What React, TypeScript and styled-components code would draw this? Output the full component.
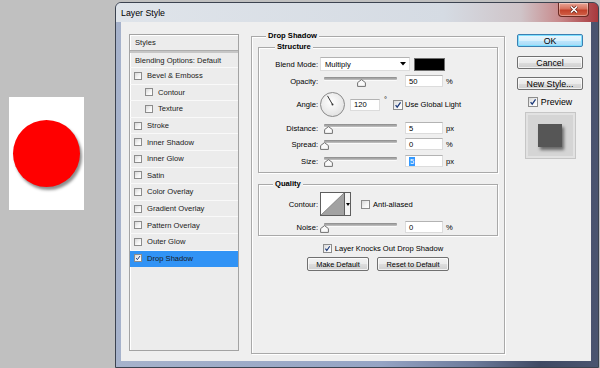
import React from "react";
import styled, { createGlobalStyle, css } from "styled-components";

const FONT = `"Liberation Sans", Arial, sans-serif`;

const GlobalStyle = createGlobalStyle`
  html, body { margin: 0; padding: 0; }
  body { background: #c0c0c0; font-family: ${FONT}; color: #000; }
  * { box-sizing: border-box; }
`;

const Page = styled.div`
  width: 600px;
  height: 368px;
  overflow: hidden;
  display: flex;
  align-items: flex-start;
  background: #c0c0c0;
`;

const Desk = styled.div`
  width: 115px;
  flex: none;
  padding: 97px 0 0 9px;
`;

const Canvas = styled.div`
  width: 75px;
  height: 113px;
  background: #fff;
  display: flex;
  align-items: center;
  justify-content: center;
`;

const Ball = styled.div`
  width: 67px;
  height: 67px;
  border-radius: 50%;
  background: #ff0000;
  box-shadow: 2px 3px 3px rgba(0, 0, 0, 0.45);
`;

const Win = styled.div`
  flex: none;
  width: 484px;
  height: 366px;
  margin-top: 2px;
  display: flex;
  flex-direction: column;
  border: 1px solid #3c4350;
  border-radius: 6px 6px 0 0;
  background: linear-gradient(to right, #a6b2cb 0%, #95a4c4 55%, #6d7b9b 74%, #3f4963 88%, #4b5570 100%);
  overflow: hidden;
`;

const TitleBar = styled.div`
  height: 19px;
  flex: none;
  display: flex;
  align-items: flex-start;
  justify-content: space-between;
  padding: 0 9px 0 5px;
  background: linear-gradient(to right, #dfe4ea 0%, #d5dbe3 68%, #cfc4c8 84%, #c88a8c 92%, #a8383c 100%);
`;

const Title = styled.span`
  font-size: 8.8px;
  line-height: 20px;
  color: #000;
`;

const CloseBtn = styled.div`
  width: 31px;
  height: 14px;
  display: flex;
  align-items: center;
  justify-content: center;
  border: 1px solid #6b2a22;
  border-top: none;
  border-radius: 0 0 4px 4px;
  background: linear-gradient(to bottom, #e9a797 0%, #d7705c 45%, #c2412a 55%, #d2624a 100%);
  box-shadow: inset 0 0 0 1px rgba(255, 255, 255, 0.35);
`;

const Body = styled.div`
  flex: 1;
  display: flex;
  padding: 0 7px 6px 5px;
`;

const Client = styled.div`
  flex: 1;
  display: flex;
  align-items: flex-start;
  gap: 12px;
  padding: 12px 8px 0 8px;
  background: #efefef;
  font-size: 7.6px;
`;

/* ---------- Styles list ---------- */

const StylesPanel = styled.div`
  width: 110px;
  height: 317px;
  flex: none;
  display: flex;
  flex-direction: column;
  border: 1px solid #a3a3a3;
  box-shadow: inset 1px 1px 0 #fff;
  background: #ececec;
  color: #1a1a1a;
`;

const ListHead = styled.div`
  height: 15px;
  flex: none;
  display: flex;
  align-items: center;
  padding-left: 5px;
`;

const HeadRule = styled.div`
  height: 3px;
  flex: none;
  background: #c6c6c6;
  border-top: 1px solid #acacac;
`;

const BlendRow = styled.div`
  height: 15px;
  flex: none;
  display: flex;
  align-items: center;
  padding-left: 5px;
  border-bottom: 1px solid #f9f9f9;
`;

const Item = styled.div<{ $indent: number; $selected?: boolean }>`
  height: 16.6px;
  flex: none;
  display: flex;
  align-items: center;
  gap: 5px;
  padding-left: ${(p) => p.$indent}px;
  border-bottom: 1px solid ${(p) => (p.$selected ? "#3193f5" : "#f9f9f9")};
  background: ${(p) => (p.$selected ? "#3193f5" : "transparent")};
`;

const Box = styled.span<{ $size: number }>`
  width: ${(p) => p.$size}px;
  height: ${(p) => p.$size}px;
  flex: none;
  display: inline-flex;
  align-items: center;
  justify-content: center;
  border: 1px solid #8c8c8c;
  background: linear-gradient(135deg, #d8d8d8 0%, #f6f6f6 60%, #ffffff 100%);
`;

/* ---------- Main panel ---------- */

const etched = css`
  border: 1px solid #a9a9a9;
  box-shadow: inset 1px 1px 0 #fff, 1px 1px 0 #fff;
`;

const Panel = styled.div`
  position: relative;
  width: 254px;
  height: 318px;
  flex: none;
  margin-top: 2px;
  padding: 10px 6px 0 6px;
  display: flex;
  flex-direction: column;
  ${etched};
`;

const Group = styled.div<{ $h: number; $mt: number; $pt: number }>`
  position: relative;
  height: ${(p) => p.$h}px;
  margin-top: ${(p) => p.$mt}px;
  padding-top: ${(p) => p.$pt}px;
  flex: none;
  display: flex;
  flex-direction: column;
  ${etched};
`;

const Legend = styled.span<{ $left: number }>`
  position: absolute;
  top: -6px;
  left: ${(p) => p.$left}px;
  padding: 0 2px;
  background: #efefef;
  font-weight: bold;
  font-size: 7.6px;
  line-height: 10px;
`;

const Row = styled.div<{ $h: number; $mt: number }>`
  height: ${(p) => p.$h}px;
  margin-top: ${(p) => p.$mt}px;
  flex: none;
  display: flex;
  align-items: center;
`;

const Label = styled.span`
  width: 59px;
  flex: none;
  margin-right: 2px;
  text-align: right;
`;

const Field = styled.div<{ $w: number }>`
  width: ${(p) => p.$w}px;
  height: 12px;
  flex: none;
  display: flex;
  align-items: center;
  padding-left: 3px;
  background: #fff;
  border: 1px solid #dcdcdc;
  border-top-color: #b3b3b3;
`;

const Selected = styled.span`
  background: #3399ff;
  color: #fff;
  padding: 0 1px;
  line-height: 9px;
`;

const Unit = styled.span`
  margin-left: 3px;
`;

const SliderWrap = styled.div`
  position: relative;
  width: 81px;
  height: 12px;
  flex: none;
  margin-right: 4px;
`;

const Track = styled.div`
  position: absolute;
  top: 2px;
  left: 4px;
  width: 73px;
  height: 3px;
  border-radius: 1px;
  background: linear-gradient(to bottom, #8a8a8a, #c4c4c4);
  box-shadow: 0 1px 0 #fafafa;
`;

const Thumb = styled.svg`
  position: absolute;
  top: 4px;
`;

const Select = styled.div`
  width: 90px;
  height: 14px;
  flex: none;
  display: flex;
  align-items: center;
  justify-content: space-between;
  padding: 0 3px 0 4px;
  margin-right: 4px;
  background: #fff;
  border: 1px solid #dcdcdc;
  border-top-color: #b3b3b3;
`;

const Swatch = styled.div`
  width: 31px;
  height: 13px;
  flex: none;
  background: #000;
  border: 1px solid #6e6e6e;
`;

const Dial = styled.svg`
  flex: none;
  margin-right: 4px;
`;

const Degree = styled.span`
  width: 9px;
  padding-left: 4px;
  align-self: flex-start;
  margin-top: 3px;
`;

const CheckLabel = styled.span<{ $ml: number }>`
  margin-left: ${(p) => p.$ml}px;
`;

const Spacer = styled.span<{ $w: number }>`
  width: ${(p) => p.$w}px;
  flex: none;
`;

const ContourBox = styled.div`
  width: 31px;
  height: 24px;
  flex: none;
  display: flex;
  background: #fff;
  border: 1px solid #5e5e5e;
`;

const ContourArrow = styled.div`
  flex: 1;
  display: flex;
  align-items: center;
  justify-content: center;
  border-left: 1px solid #5e5e5e;
  background: #f4f4f4;
`;

const CenterRow = styled.div<{ $h: number; $mt: number; $shift: number }>`
  height: ${(p) => p.$h}px;
  margin-top: ${(p) => p.$mt}px;
  padding-left: ${(p) => p.$shift}px;
  flex: none;
  display: flex;
  align-items: center;
  justify-content: center;
  gap: 8px;
`;

const Btn = styled.div<{ $w: number; $h: number; $size: number; $primary?: boolean }>`
  width: ${(p) => p.$w}px;
  height: ${(p) => p.$h}px;
  flex: none;
  display: flex;
  align-items: center;
  justify-content: center;
  font-size: ${(p) => p.$size}px;
  color: #000;
  border-radius: 2px;
  border: 1px solid ${(p) => (p.$primary ? "#3c7fb1" : "#707070")};
  background: ${(p) =>
    p.$primary
      ? "linear-gradient(to bottom, #eaf6fd 0%, #d9f0fc 50%, #bee6fd 51%, #a7d9f5 100%)"
      : "linear-gradient(to bottom, #f2f2f2 0%, #ebebeb 50%, #dddddd 51%, #cfcfcf 100%)"};
  box-shadow: inset 0 0 0 1px ${(p) => (p.$primary ? "#7ee0ff" : "rgba(255,255,255,0.7)")};
`;

/* ---------- Side column ---------- */

const Side = styled.div`
  width: 66px;
  flex: none;
  display: flex;
  flex-direction: column;
  align-items: center;
`;

const SideGap = styled.div<{ $h: number }>`
  height: ${(p) => p.$h}px;
  flex: none;
`;

const PreviewRow = styled.div`
  height: 10px;
  display: flex;
  align-items: center;
  gap: 3px;
  font-size: 8.8px;
`;

const PreviewBox = styled.div`
  width: 51px;
  height: 47px;
  display: flex;
  align-items: center;
  justify-content: center;
  background: #d5d5d5;
  border: 1px solid #c6c6c6;
  box-shadow: inset 0 0 0 2px #e2e2e2;
`;

const PreviewSquare = styled.div`
  width: 24px;
  height: 23px;
  background: #565656;
  box-shadow: 2px 3px 3px rgba(0, 0, 0, 0.5);
`;

/* ---------- Pieces ---------- */

const Tick: React.FC<{ s: number }> = ({ s }) => (
  <svg width={s} height={s} viewBox="0 0 10 10">
    <path d="M2 5.2 L4 7.8 L8.2 1.8" fill="none" stroke="#1c3a7a" strokeWidth="1.6" />
  </svg>
);

const CheckBox: React.FC<{ size: number; checked?: boolean }> = ({ size, checked }) => (
  <Box $size={size}>{checked && <Tick s={size - 2} />}</Box>
);

const Slider: React.FC<{ frac: number }> = ({ frac }) => (
  <SliderWrap>
    <Track />
    <Thumb width="9" height="8" viewBox="0 0 9 8" style={{ left: `${frac * 73}px` }}>
      <path d="M4.5 0.6 L8.4 3.6 L8.4 7.4 L0.6 7.4 L0.6 3.6 Z" fill="#fafafa" stroke="#707070" strokeWidth="1" />
    </Thumb>
  </SliderWrap>
);

const DownArrow: React.FC = () => (
  <svg width="6" height="4" viewBox="0 0 6 4">
    <path d="M0 0 H6 L3 3.5 Z" fill="#000" />
  </svg>
);

const SliderRow: React.FC<{ label: string; frac: number; value: React.ReactNode; unit: string; mt: number }> = ({
  label,
  frac,
  value,
  unit,
  mt,
}) => (
  <Row $h={12} $mt={mt}>
    <Label>{label}</Label>
    <Slider frac={frac} />
    <Field $w={38}>{value}</Field>
    <Unit>{unit}</Unit>
  </Row>
);

const styleItems: { label: string; indent: number; checked?: boolean }[] = [
  { label: "Bevel & Emboss", indent: 4 },
  { label: "Contour", indent: 15 },
  { label: "Texture", indent: 15 },
  { label: "Stroke", indent: 4 },
  { label: "Inner Shadow", indent: 4 },
  { label: "Inner Glow", indent: 4 },
  { label: "Satin", indent: 4 },
  { label: "Color Overlay", indent: 4 },
  { label: "Gradient Overlay", indent: 4 },
  { label: "Pattern Overlay", indent: 4 },
  { label: "Outer Glow", indent: 4 },
  { label: "Drop Shadow", indent: 4, checked: true },
];

export default function App() {
  const angle = (120 * Math.PI) / 180;
  const lx = 12.5 + 10 * Math.cos(angle);
  const ly = 12.5 - 10 * Math.sin(angle);
  return (
    <>
      <GlobalStyle />
      <Page>
        <Desk>
          <Canvas>
            <Ball />
          </Canvas>
        </Desk>
        <Win>
          <TitleBar>
            <Title>Layer Style</Title>
            <CloseBtn>
              <svg width="10" height="9" viewBox="0 0 10 9">
                <path d="M2 1.5 L8 7.5 M8 1.5 L2 7.5" stroke="#5a1a12" strokeWidth="3" />
                <path d="M2 1.5 L8 7.5 M8 1.5 L2 7.5" stroke="#fff" strokeWidth="1.7" />
              </svg>
            </CloseBtn>
          </TitleBar>
          <Body>
            <Client>
              <StylesPanel>
                <ListHead>Styles</ListHead>
                <HeadRule />
                <BlendRow>Blending Options: Default</BlendRow>
                {styleItems.map((it) => (
                  <Item key={it.label} $indent={it.indent} $selected={it.checked}>
                    <CheckBox size={8} checked={it.checked} />
                    <span>{it.label}</span>
                  </Item>
                ))}
              </StylesPanel>

              <Panel>
                <Legend $left={14}>Drop Shadow</Legend>
                <Group $h={126} $mt={0} $pt={9}>
                  <Legend $left={16}>Structure</Legend>
                  <Row $h={14} $mt={0}>
                    <Label>Blend Mode:</Label>
                    <Select>
                      <span>Multiply</span>
                      <DownArrow />
                    </Select>
                    <Swatch />
                  </Row>
                  <SliderRow label="Opacity:" frac={0.5} value="50" unit="%" mt={4} />
                  <Row $h={25} $mt={5}>
                    <Label>Angle:</Label>
                    <Dial width="26" height="26" viewBox="0 0 26 26">
                      <defs>
                        <radialGradient id="dialg" cx="45%" cy="40%" r="60%">
                          <stop offset="0%" stopColor="#ffffff" />
                          <stop offset="100%" stopColor="#e2e2e2" />
                        </radialGradient>
                      </defs>
                      <circle cx="12.5" cy="12.5" r="12" fill="url(#dialg)" stroke="#8a8a8a" strokeWidth="1" />
                      <line x1="12.5" y1="12.5" x2={lx} y2={ly} stroke="#333" strokeWidth="1" />
                      <circle cx="12.5" cy="12.5" r="1" fill="#333" />
                    </Dial>
                    <Field $w={30}>120</Field>
                    <Degree>°</Degree>
                    <Spacer $w={4} />
                    <CheckBox size={10} checked />
                    <CheckLabel $ml={2}>Use Global Light</CheckLabel>
                  </Row>
                  <SliderRow label="Distance:" frac={0.055} value="5" unit="px" mt={5} />
                  <SliderRow label="Spread:" frac={0} value="0" unit="%" mt={4} />
                  <SliderRow label="Size:" frac={0.055} value={<Selected>5</Selected>} unit="px" mt={5} />
                </Group>

                <Group $h={52} $mt={11} $pt={7}>
                  <Legend $left={14}>Quality</Legend>
                  <Row $h={24} $mt={0}>
                    <Label>Contour:</Label>
                    <ContourBox>
                      <svg width="23" height="22" viewBox="0 0 23 22">
                        <polygon points="0,22 23,0 23,22" fill="#a2a2a2" />
                        <line x1="0" y1="22" x2="23" y2="0" stroke="#7a7a7a" strokeWidth="0.8" />
                      </svg>
                      <ContourArrow>
                        <svg width="4" height="3" viewBox="0 0 4 3">
                          <path d="M0 0 H4 L2 3 Z" fill="#000" />
                        </svg>
                      </ContourArrow>
                    </ContourBox>
                    <Spacer $w={10} />
                    <CheckBox size={9} />
                    <CheckLabel $ml={3}>Anti-aliased</CheckLabel>
                  </Row>
                  <SliderRow label="Noise:" frac={0} value="0" unit="%" mt={5} />
                </Group>

                <CenterRow $h={12} $mt={6} $shift={10}>
                  <CheckBox size={9} checked />
                  <CheckLabel $ml={-5}>Layer Knocks Out Drop Shadow</CheckLabel>
                </CenterRow>
                <CenterRow $h={14} $mt={3} $shift={0}>
                  <Btn $w={62} $h={14} $size={7.4}>Make Default</Btn>
                  <Btn $w={72} $h={14} $size={7.4}>Reset to Default</Btn>
                </CenterRow>
              </Panel>

              <Side>
                <Btn $w={66} $h={13} $size={8.8} $primary>OK</Btn>
                <SideGap $h={9} />
                <Btn $w={66} $h={13} $size={8.8}>Cancel</Btn>
                <SideGap $h={8} />
                <Btn $w={66} $h={13} $size={8.8}>New Style...</Btn>
                <SideGap $h={7} />
                <PreviewRow>
                  <CheckBox size={10} checked />
                  <span>Preview</span>
                </PreviewRow>
                <SideGap $h={5} />
                <PreviewBox>
                  <PreviewSquare />
                </PreviewBox>
              </Side>
            </Client>
          </Body>
        </Win>
      </Page>
    </>
  );
}
